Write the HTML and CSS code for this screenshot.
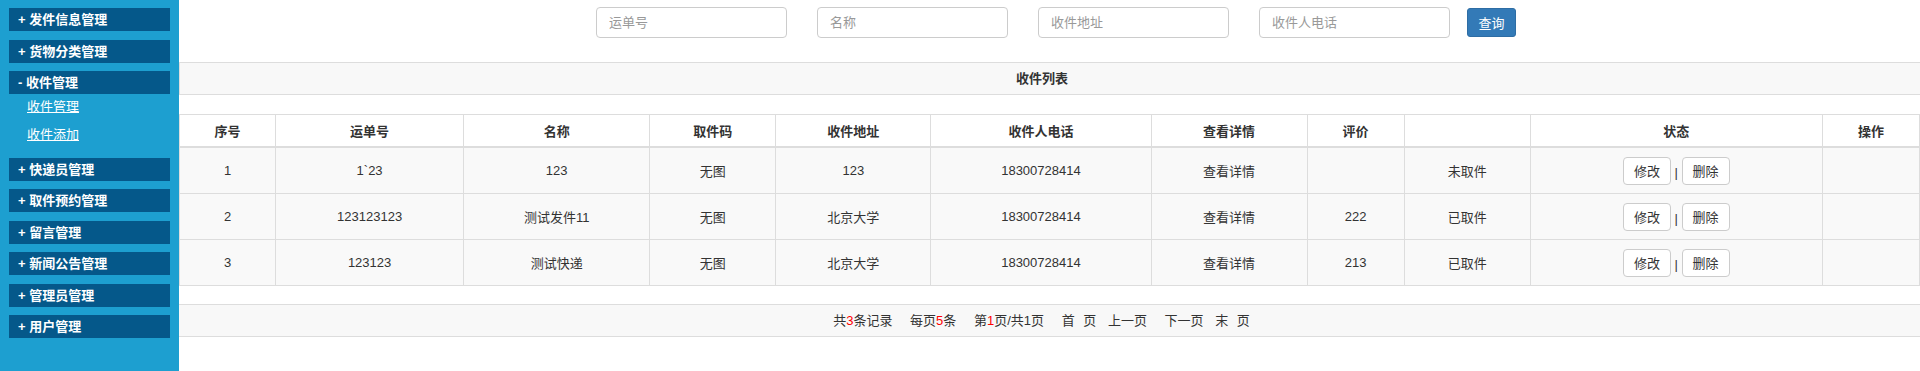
FILE: index.html
```html
<!DOCTYPE html>
<html lang="zh-CN">
<head>
    <meta charset="UTF-8">
    <title>收件管理</title>
    <link rel="stylesheet" href="styles.css">
</head>
<body>
<div class="page">
    <div class="sidebar">
        <div class="menu-group">
            <div class="menu-title">+ 发件信息管理</div>
        </div>
        <div class="menu-group">
            <div class="menu-title">+ 货物分类管理</div>
        </div>
        <div class="menu-group">
            <div class="menu-title">- 收件管理</div>
            <ul class="submenu">
                <li><a href="#">收件管理</a></li>
                <li><a href="#">收件添加</a></li>
            </ul>
        </div>
        <div class="menu-group">
            <div class="menu-title">+ 快递员管理</div>
        </div>
        <div class="menu-group">
            <div class="menu-title">+ 取件预约管理</div>
        </div>
        <div class="menu-group">
            <div class="menu-title">+ 留言管理</div>
        </div>
        <div class="menu-group">
            <div class="menu-title">+ 新闻公告管理</div>
        </div>
        <div class="menu-group">
            <div class="menu-title">+ 管理员管理</div>
        </div>
        <div class="menu-group">
            <div class="menu-title">+ 用户管理</div>
        </div>
    </div>

    <div class="main">
        <form class="search-form">
            <input type="text" class="search-input" placeholder="运单号">
            <input type="text" class="search-input" placeholder="名称">
            <input type="text" class="search-input" placeholder="收件地址">
            <input type="text" class="search-input" placeholder="收件人电话">
            <button type="submit" class="btn-search">查询</button>
        </form>

        <div class="panel-title">收件列表</div>

        <table class="list-table">
            <colgroup>
                <col class="w96">
                <col class="w188">
                <col class="w186">
                <col class="w126">
                <col class="w155">
                <col class="w220">
                <col class="w156">
                <col class="w97">
                <col class="w126">
                <col class="w292">
                <col class="w97">
            </colgroup>
            <thead>
                <tr>
                    <th>序号</th>
                    <th>运单号</th>
                    <th>名称</th>
                    <th>取件码</th>
                    <th>收件地址</th>
                    <th>收件人电话</th>
                    <th>查看详情</th>
                    <th>评价</th>
                    <th></th>
                    <th>状态</th>
                    <th>操作</th>
                </tr>
            </thead>
            <tbody>
                <tr>
                    <td>1</td>
                    <td>1`23</td>
                    <td>123</td>
                    <td>无图</td>
                    <td>123</td>
                    <td>18300728414</td>
                    <td>查看详情</td>
                    <td></td>
                    <td>未取件</td>
                    <td><button class="btn-row">修改</button> | <button class="btn-row">删除</button></td>
                    <td></td>
                </tr>
                <tr>
                    <td>2</td>
                    <td>123123123</td>
                    <td>测试发件11</td>
                    <td>无图</td>
                    <td>北京大学</td>
                    <td>18300728414</td>
                    <td>查看详情</td>
                    <td>222</td>
                    <td>已取件</td>
                    <td><button class="btn-row">修改</button> | <button class="btn-row">删除</button></td>
                    <td></td>
                </tr>
                <tr>
                    <td>3</td>
                    <td>123123</td>
                    <td>测试快递</td>
                    <td>无图</td>
                    <td>北京大学</td>
                    <td>18300728414</td>
                    <td>查看详情</td>
                    <td>213</td>
                    <td>已取件</td>
                    <td><button class="btn-row">修改</button> | <button class="btn-row">删除</button></td>
                    <td></td>
                </tr>
            </tbody>
        </table>

        <div class="pager">
            <span>共<em>3</em>条记录</span>
            <span>每页<em>5</em>条</span>
            <span>第<em>1</em>页/共1页</span>
            <span class="spaced">首 页</span>
            <span class="near">上一页</span>
            <span>下一页</span>
            <span class="spaced near">末 页</span>
        </div>
    </div>
</div>
</body>
</html>
```

FILE: styles.css
```css
body {
    margin: 0;
    font-family: "Liberation Sans", "Noto Sans CJK SC", sans-serif;
    font-size: 13px;
    color: #333;
    background-color: #fff;
}

.page {
    display: flex;
    min-height: 100vh;
}

/* sidebar */
.sidebar {
    width: 179px;
    flex-shrink: 0;
    background-color: #1d9fd0;
    padding-top: 8px;
    box-sizing: border-box;
}

.menu-group {
    margin: 0 9px 8.5px 9px;
}

.menu-title {
    height: 23px;
    line-height: 23px;
    padding-left: 9px;
    background-color: #05588a;
    color: #fff;
    font-weight: bold;
    white-space: nowrap;
}

.submenu {
    list-style: none;
    margin: -1px 0 2.5px 0;
    padding: 0 0 0 18px;
}

.submenu li {
    height: 28px;
    line-height: 28px;
}

.submenu a {
    color: #fff;
    text-decoration: underline;
}

/* main area */
.main {
    flex: 1;
    min-width: 0;
}

.search-form {
    display: flex;
    justify-content: center;
    align-items: center;
    padding: 7px 0 0 13px;
    height: 31px;
}

.search-input {
    width: 191px;
    height: 31px;
    box-sizing: border-box;
    margin-right: 30px;
    padding: 0 12px;
    border: 1px solid #ccc;
    border-radius: 4px;
    font-family: inherit;
    font-size: 13px;
    color: #555;
}

.search-input:last-of-type {
    margin-right: 17px;
}

.search-input::placeholder {
    color: #999;
}

.btn-search {
    width: 49px;
    height: 29px;
    padding: 0;
    border: 1px solid #2e6da4;
    border-radius: 3px;
    background-color: #337ab7;
    color: #fff;
    font-family: inherit;
    font-size: 13px;
    cursor: pointer;
}

.panel-title {
    margin-top: 24px;
    height: 31px;
    line-height: 31px;
    border-top: 1px solid #ddd;
    border-bottom: 1px solid #ddd;
    border-left: 1px solid #ddd;
    background-color: #f8f8f8;
    text-align: center;
    font-weight: bold;
    padding-right: 16px;
}

/* table */
.list-table {
    margin-top: 19px;
    width: 100%;
    table-layout: fixed;
    border-collapse: collapse;
}

.w96 { width: 96px; }
.w97 { width: 97px; }
.w126 { width: 126px; }
.w155 { width: 155px; }
.w156 { width: 156px; }
.w186 { width: 186px; }
.w188 { width: 188px; }
.w220 { width: 220px; }
.w292 { width: 292px; }

.list-table th,
.list-table td {
    border: 1px solid #ddd;
    text-align: center;
    vertical-align: middle;
    padding: 0 8px;
    white-space: nowrap;
}

.list-table th {
    height: 31px;
    font-weight: bold;
    border-bottom: 2px solid #ddd;
    background-color: #fff;
}

.list-table td {
    height: 45px;
    background-color: #f9f9f9;
}

.btn-row {
    height: 28px;
    padding: 0 10px;
    border: 1px solid #ccc;
    border-radius: 4px;
    background-color: #fff;
    color: #333;
    font-family: inherit;
    font-size: 13px;
    cursor: pointer;
}

/* pager */
.pager {
    margin-top: 18px;
    height: 31px;
    line-height: 31px;
    border-top: 1px solid #ddd;
    border-bottom: 1px solid #ddd;
    background-color: #f8f8f8;
    text-align: center;
    padding-right: 16px;
}

.pager span {
    margin: 0 7px;
}

.pager span.near {
    margin-left: 1px;
}

.pager em {
    font-style: normal;
    color: #f00;
}

.spaced {
    word-spacing: 5px;
}
```
